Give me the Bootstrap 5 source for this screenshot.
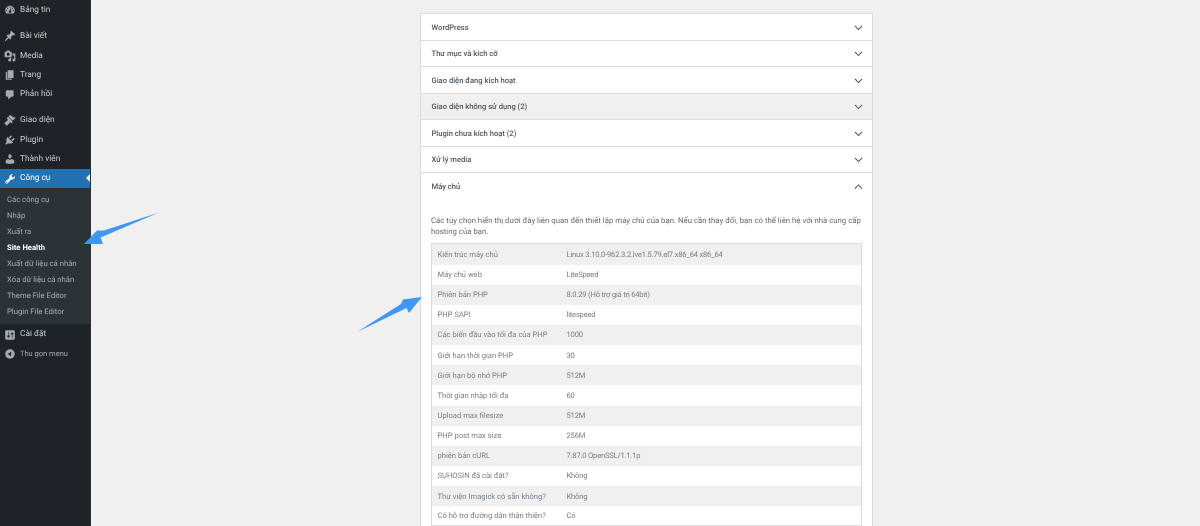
<!DOCTYPE html>
<html lang="vi"><head><meta charset="utf-8"><title>Site Health</title>
<link href="https://cdn.jsdelivr.net/npm/bootstrap@5.3.0/dist/css/bootstrap.min.css" rel="stylesheet">
<style>
html,body{height:526px;overflow:hidden;background:#f0f0f1}
body{font-family:Roboto,"Open Sans",sans-serif;font-size:7.8px;color:#50575e;position:relative;text-rendering:geometricPrecision}
.wp-shell{height:526px}
.wp-side{width:91px;flex:none;background:#1d2327;border-right:1px solid #2c3338;padding-top:.5px}
.wp-item{height:19.4px;color:#c9ccce;font-size:8.3px;padding:.5px 0 0 4px;gap:4px}
.wp-item span,.wp-sub div,.hc-txt,.hc-body p,.hc-tr span{filter:blur(.25px)}
.wp-item svg{width:12px;height:12px;fill:#a7aaad;flex:none;filter:blur(.25px)}
.wp-item.first{margin-bottom:6.6px}
.wp-item.gap-after{margin-bottom:6.5px}
.wp-item.active{background:#2271b1;color:#fff;position:relative}
.wp-item.active svg{fill:#fff}
.wp-item.active::after{content:"";position:absolute;right:0;top:5.5px;border:4px solid transparent;border-right-color:#f0f0f1;border-left:0}
.wp-sub{background:#2c3338;padding:4px 0 3.5px;margin-bottom:1px}
.wp-sub div{height:16px;line-height:16px;padding-left:7px;font-size:7.7px;color:#a9aeb3}
.wp-sub div.cur{color:#fff;font-weight:700}
.wp-collapse{color:#a7aaad;font-size:7.5px}
.wp-main{flex:1;padding:13px 0 0 329px}
.hc-box{width:453px;background:#fff;border:1px solid #dcdcde;border-bottom:0;height:530px}
.hc-row{height:26.55px;border-bottom:1px solid #dcdcde;padding:1px 9.5px 0 10.5px;font-size:7.6px;font-weight:500;color:#50575e}
.hc-row.hov{background:#f0f0f1}
.hc-row svg{width:9px;height:5.5px;stroke:#50575e;fill:none;stroke-width:1.2}
.hc-open{border-bottom:0}
.hc-body{padding:14.8px 10.500px 0 10px}
.hc-body p{line-height:11.4px;margin:0 0 6px;color:#646970}
.hc-table{border-top:1px solid #dcdcde}
.hc-tr{height:20.15px;padding:.2px 0 0 5.5px;font-size:7.6px;color:#787c82;border-left:1px solid #dcdcde;border-right:1px solid #dcdcde}
.hc-tr:nth-child(odd){background:#f0f0f1}
.hc-k{width:129px;flex:none}
.hc-tr span:last-child{letter-spacing:-.2px}
.hc-tr:last-child{border-bottom:1px solid #dcdcde}
.anno{position:absolute;pointer-events:none}
.anno-a{left:80px;top:210px;width:80px;height:40px}
.anno-b{left:355px;top:294px;width:70px;height:40px}
</style></head><body>
<div class="wp-shell d-flex">
<nav class="wp-side d-flex flex-column">
<div class="wp-item first d-flex align-items-center"><svg viewBox="0 0 20 20"><path d="M3.760 16h12.480c1.100-1.370 1.760-3.110 1.760-5 0-4.420-3.580-8-8-8s-8 3.580-8 8c0 1.890.66 3.630 1.760 5zM10 4c.55 0 1 .45 1 1s-.45 1-1 1-1-.45-1-1 .45-1 1-1zM6 6c.55 0 1 .45 1 1s-.45 1-1 1-1-.45-1-1 .45-1 1-1zm8 0c.55 0 1 .45 1 1s-.45 1-1 1-1-.45-1-1 .45-1 1-1zm-5.370 5.550L12 7v6c0 1.100-.9 2-2 2s-2-.9-2-2c0-.57.24-1.080.63-1.450zM4 10c.55 0 1 .45 1 1s-.45 1-1 1-1-.45-1-1 .45-1 1-1zm12 0c.55 0 1 .45 1 1s-.45 1-1 1-1-.45-1-1 .45-1 1-1z"/></svg><span>Bảng tin</span></div>
<div class="wp-item d-flex align-items-center"><svg viewBox="0 0 20 20"><path d="M10.440 3.020l1.820-1.820 6.360 6.350-1.830 1.820c-1.050-.68-2.480-.57-3.410.36l-.75.75c-.92.93-1.040 2.350-.35 3.410l-1.830 1.820-2.410-2.410-2.800 2.790c-.42.42-3.380 2.710-3.800 2.290s1.860-3.390 2.280-3.810l2.790-2.790L4.100 9.360l1.830-1.820c1.050.69 2.480.57 3.400-.36l.75-.75c.93-.92 1.050-2.350.36-3.410z"/></svg><span>Bài viết</span></div>
<div class="wp-item d-flex align-items-center"><svg viewBox="0 0 20 20"><path d="M13 11V4c0-.55-.45-1-1-1h-1.670L9 1H5L3.670 3H2c-.55 0-1 .45-1 1v7c0 .55.45 1 1 1h10c.55 0 1-.45 1-1zM7 4.500c1.380 0 2.500 1.120 2.500 2.500S8.380 9.500 7 9.500 4.500 8.380 4.500 7 5.620 4.500 7 4.500zM14 6h5v10.500c0 1.380-1.120 2.500-2.500 2.500S14 17.880 14 16.500s1.120-2.500 2.500-2.500c.17 0 .34.020.5.050V9h-3V6zm-4 8.050V13h2v3.500c0 1.380-1.120 2.500-2.500 2.500S7 17.880 7 16.500 8.120 14 9.500 14c.17 0 .34.020.5.050z"/></svg><span>Media</span></div>
<div class="wp-item d-flex align-items-center"><svg viewBox="0 0 20 20"><path d="M6 15V2h10v13H6zm-1 1h8v2H3V5h2v11z"/></svg><span>Trang</span></div>
<div class="wp-item gap-after d-flex align-items-center"><svg viewBox="0 0 20 20"><path d="M5 2h9c1.100 0 2 .9 2 2v7c0 1.100-.9 2-2 2h-2l-5 5v-5H5c-1.100 0-2-.9-2-2V4c0-1.100.9-2 2-2z"/></svg><span>Phản hồi</span></div>
<div class="wp-item d-flex align-items-center"><svg viewBox="0 0 20 20"><path d="M14.480 11.060L7.410 3.990l1.500-1.500c.5-.56 2.300-.47 3.510.32 1.210.8 1.430 1.280 2.910 2.100 1.180.64 2.450 1.260 4.450.85zm-.71.71L6.700 4.700 4.930 6.470c-.39.39-.39 1.020 0 1.410l1.060 1.060c.39.39.39 1.030 0 1.420-.6.6-1.600 1.320-2.240 1.960L.55 15.200c-.1.1-.1.23 0 .32l3.950 3.950c.09.1.22.1.32 0L8 16.290c.64-.64 1.360-1.640 1.960-2.240.39-.39 1.030-.39 1.420 0l1.060 1.060c.39.39 1.020.39 1.410 0z"/></svg><span>Giao diện</span></div>
<div class="wp-item d-flex align-items-center"><svg viewBox="0 0 20 20"><path d="M13.110 4.360L9.870 7.600 8 5.730l3.240-3.240c.35-.34 1.050-.2 1.560.32.52.51.66 1.210.31 1.550zm-8 1.770l.91-1.120 9.010 9.010-1.190.84c-.71.71-2.630 1.160-3.820 1.160H6.140L4.900 17.260c-.59.59-1.540.59-2.120 0-.59-.58-.59-1.530 0-2.120l1.240-1.240v-3.880c0-1.130.4-3.180 1.090-3.890zm7.260 3.970l3.240-3.240c.34-.35 1.040-.21 1.550.31.52.51.66 1.210.31 1.550l-3.240 3.250z"/></svg><span>Plugin</span></div>
<div class="wp-item d-flex align-items-center"><svg viewBox="0 0 20 20"><path d="M10 9.250c-2.270 0-2.730-3.440-2.730-3.440C7 4.020 7.820 2 9.970 2c2.160 0 2.980 2.020 2.710 3.810 0 0-.41 3.440-2.680 3.440zm0 2.570L12.720 10c2.390 0 4.520 2.330 4.520 4.530v2.490s-3.650 1.130-7.240 1.130c-3.650 0-7.240-1.130-7.240-1.130v-2.490c0-2.250 1.940-4.480 4.470-4.480z"/></svg><span>Thành viên</span></div>
<div class="wp-item active d-flex align-items-center"><svg viewBox="0 0 20 20"><path d="M16.680 9.770c-1.340 1.340-3.300 1.670-4.950.99l-5.410 6.520c-.99.99-2.590.99-3.580 0s-.99-2.590 0-3.570l6.520-5.420c-.68-1.650-.35-3.610.99-4.950 1.280-1.280 3.120-1.620 4.720-1.060l-2.890 2.890 2.820 2.820 2.860-2.870c.53 1.580.18 3.390-1.080 4.650zM3.810 16.210c.4.39 1.040.39 1.430 0 .4-.4.4-1.040 0-1.430-.39-.4-1.030-.4-1.430 0-.39.39-.39 1.030 0 1.430z"/></svg><span>Công cụ</span></div>
<div class="wp-sub"><div>Các công cụ</div><div>Nhập</div><div>Xuất ra</div><div class="cur">Site Health</div><div>Xuất dữ liệu cá nhân</div><div>Xóa dữ liệu cá nhân</div><div>Theme File Editor</div><div>Plugin File Editor</div></div>
<div class="wp-item d-flex align-items-center"><svg viewBox="0 0 20 20"><path d="M18 16V4c0-1.100-.9-2-2-2H4c-1.100 0-2 .9-2 2v12c0 1.100.9 2 2 2h12c1.100 0 2-.9 2-2zM8 11h1c.55 0 1 .45 1 1s-.45 1-1 1H8v1.500c0 .28-.22.5-.5.5s-.5-.22-.5-.5V13H6c-.55 0-1-.45-1-1s.45-1 1-1h1V5.500c0-.28.22-.5.5-.5s.5.22.5.5V11zm5-2h-1c-.55 0-1-.45-1-1s.45-1 1-1h1V5.500c0-.28.22-.5.5-.5s.5.22.5.5V7h1c.55 0 1 .45 1 1s-.45 1-1 1h-1v5.500c0 .28-.22.5-.5.5s-.5-.22-.5-.5V9z"/></svg><span>Cài đặt</span></div>
<div class="wp-item wp-collapse d-flex align-items-center"><svg viewBox="0 0 20 20"><path d="M10 2.160c4.330 0 7.840 3.510 7.840 7.840s-3.510 7.840-7.840 7.840S2.160 14.330 2.160 10 5.710 2.160 10 2.160zm2 11.720V6.120L6.180 9.950z"/></svg><span>Thu gọn menu</span></div>
</nav>
<main class="wp-main">
<section class="hc-box">
<div class="hc-row d-flex align-items-center justify-content-between"><span class="hc-txt">WordPress</span><svg viewBox="0 0 10 6"><path d="M1 1l4 4 4-4"/></svg></div>
<div class="hc-row d-flex align-items-center justify-content-between"><span class="hc-txt">Thư mục và kích cỡ</span><svg viewBox="0 0 10 6"><path d="M1 1l4 4 4-4"/></svg></div>
<div class="hc-row d-flex align-items-center justify-content-between"><span class="hc-txt">Giao diện đang kích hoạt</span><svg viewBox="0 0 10 6"><path d="M1 1l4 4 4-4"/></svg></div>
<div class="hc-row hov d-flex align-items-center justify-content-between"><span class="hc-txt">Giao diện không sử dụng (2)</span><svg viewBox="0 0 10 6"><path d="M1 1l4 4 4-4"/></svg></div>
<div class="hc-row d-flex align-items-center justify-content-between"><span class="hc-txt">Plugin chưa kích hoạt (2)</span><svg viewBox="0 0 10 6"><path d="M1 1l4 4 4-4"/></svg></div>
<div class="hc-row d-flex align-items-center justify-content-between"><span class="hc-txt">Xử lý media</span><svg viewBox="0 0 10 6"><path d="M1 1l4 4 4-4"/></svg></div>
<div class="hc-row hc-open d-flex align-items-center justify-content-between"><span class="hc-txt">Máy chủ</span><svg viewBox="0 0 10 6"><path d="M1 5l4-4 4 4"/></svg></div>
<div class="hc-body">
<p>Các tùy chọn hiển thị dưới đây liên quan đến thiết lập máy chủ của bạn. Nếu cần thay đổi, bạn có thể liên hệ với nhà cung cấp hosting của bạn.</p>
<div class="hc-table">
<div class="hc-tr d-flex align-items-center"><span class="hc-k">Kiến trúc máy chủ</span><span>Linux 3.10.0-962.3.2.lve1.5.79.el7.x86_64 x86_64</span></div>
<div class="hc-tr d-flex align-items-center"><span class="hc-k">Máy chủ web</span><span>LiteSpeed</span></div>
<div class="hc-tr d-flex align-items-center"><span class="hc-k">Phiên bản PHP</span><span>8.0.29 (Hỗ trợ giá trị 64bit)</span></div>
<div class="hc-tr d-flex align-items-center"><span class="hc-k">PHP SAPI</span><span>litespeed</span></div>
<div class="hc-tr d-flex align-items-center"><span class="hc-k">Các biến đầu vào tối đa của PHP</span><span>1000</span></div>
<div class="hc-tr d-flex align-items-center"><span class="hc-k">Giới hạn thời gian PHP</span><span>30</span></div>
<div class="hc-tr d-flex align-items-center"><span class="hc-k">Giới hạn bộ nhớ PHP</span><span>512M</span></div>
<div class="hc-tr d-flex align-items-center"><span class="hc-k">Thời gian nhập tối đa</span><span>60</span></div>
<div class="hc-tr d-flex align-items-center"><span class="hc-k">Upload max filesize</span><span>512M</span></div>
<div class="hc-tr d-flex align-items-center"><span class="hc-k">PHP post max size</span><span>256M</span></div>
<div class="hc-tr d-flex align-items-center"><span class="hc-k">phiên bản cURL</span><span>7.87.0 OpenSSL/1.1.1p</span></div>
<div class="hc-tr d-flex align-items-center"><span class="hc-k">SUHOSIN đã cài đặt?</span><span>Không</span></div>
<div class="hc-tr d-flex align-items-center"><span class="hc-k">Thư viện Imagick có sẵn không?</span><span>Không</span></div>
<div class="hc-tr d-flex align-items-center"><span class="hc-k">Có hỗ trợ đường dẫn thân thiện?</span><span>Có</span></div>
</div></div>
</section>
</main>
</div>
<svg class="anno anno-a" viewBox="0 0 80 40"><path d="M79 2.500 24 20.500l-7 0L4 34h19l-2.500-6.500z" fill="#3d97f5"/></svg>
<svg class="anno anno-b" viewBox="0 0 70 40"><path d="M2 38 46 10l2-4.500L67 3 54 19l-2.500-5z" fill="#3d97f5"/></svg>
</body></html>
